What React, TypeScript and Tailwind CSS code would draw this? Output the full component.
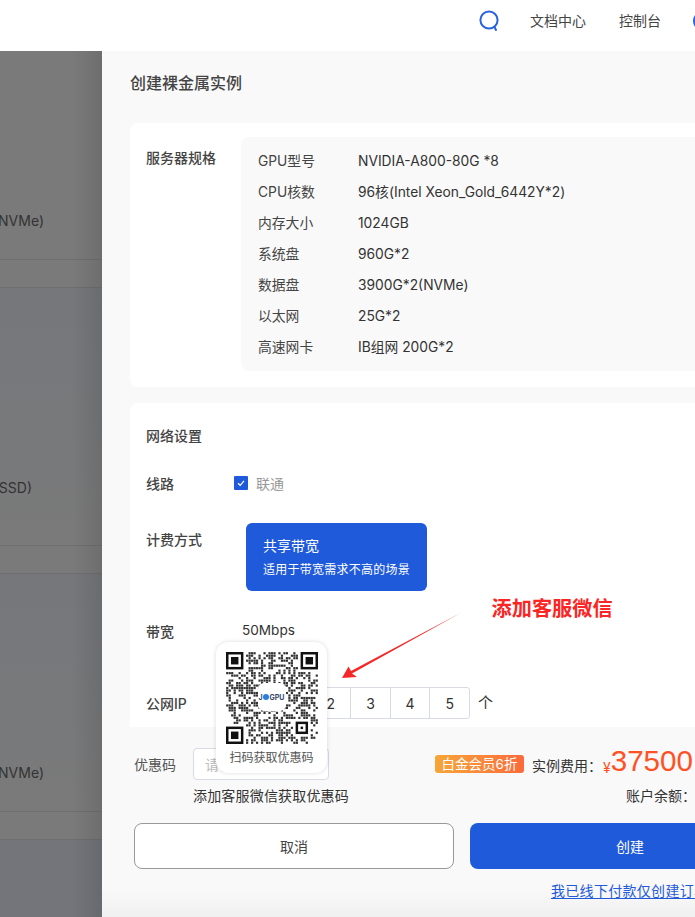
import React from "react";

const specs: [string, string][] = [
  ["GPU型号", "NVIDIA-A800-80G *8"],
  ["CPU核数", "96核(Intel Xeon_Gold_6442Y*2)"],
  ["内存大小", "1024GB"],
  ["系统盘", "960G*2"],
  ["数据盘", "3900G*2(NVMe)"],
  ["以太网", "25G*2"],
  ["高速网卡", "IB组网 200G*2"],
];

const N = 37;
function qrCells(): [number, number][] {
  const out: [number, number][] = [];
  let s = 20240611;
  const inBox = (x: number, y: number, a: number, b: number, w: number) => x >= a && x < a + w && y >= b && y < b + w;
  for (let y = 0; y < N; y++) {
    for (let x = 0; x < N; x++) {
      s = (s * 1664525 + 1013904223) >>> 0;
      if (inBox(x, y, 0, 0, 8) || inBox(x, y, N - 8, 0, 8) || inBox(x, y, 0, N - 8, 8) || inBox(x, y, 27, 27, 7)) continue;
      if ((s >>> 16) % 100 < 50) out.push([x, y]);
    }
  }
  return out;
}
const cells = qrCells();

function Finder({ x, y }: { x: number; y: number }) {
  return (
    <g>
      <rect x={x} y={y} width={7} height={7} fill="#111" />
      <rect x={x + 1} y={y + 1} width={5} height={5} fill="#fff" />
      <rect x={x + 2} y={y + 2} width={3} height={3} fill="#111" />
    </g>
  );
}

function QrCode() {
  return (
    <div className="relative h-[92px] w-[92px]">
      <svg width="92" height="92" viewBox={`0 0 ${N} ${N}`}>
        {cells.map(([x, y]) => (
          <rect key={`${x}-${y}`} x={x + 0.06} y={y + 0.06} width={0.88} height={0.88} fill="#333" />
        ))}
        <Finder x={0} y={0} />
        <Finder x={N - 7} y={0} />
        <Finder x={0} y={N - 7} />
        <rect x={28} y={28} width={5} height={5} fill="#111" />
        <rect x={29} y={29} width={3} height={3} fill="#fff" />
        <rect x={30} y={30} width={1} height={1} fill="#111" />
      </svg>
      <div className="absolute left-[32px] top-[31px] flex h-[28px] w-[28px] items-center justify-center rounded-md bg-white">
        <span className="flex items-center text-[7px] font-bold leading-none text-[#33476b]">
          J
          <span className="mx-[0.5px] inline-block h-[6px] w-[6px] rounded-full bg-[#2a7de1]" />
          GPU
        </span>
      </div>
    </div>
  );
}

export default function App() {
  return (
    <div className="flex h-[917px] w-[695px] flex-col overflow-hidden bg-white font-['Inter','Noto_Sans_CJK_SC',sans-serif] text-[14px] text-[#333]">
      <header className="flex h-[51px] shrink-0 items-center bg-white pb-[10px] pl-[478px]">
        <svg width="22" height="24" viewBox="0 0 22 24" fill="none" className="mt-[1px] shrink-0">
          <circle cx="11" cy="11" r="8.6" stroke="#2a62e0" strokeWidth="2" />
          <path d="M16.5 18 L18 21" stroke="#2a62e0" strokeWidth="2" strokeLinecap="round" />
        </svg>
        <span className="ml-[30px] whitespace-nowrap text-[#444]">文档中心</span>
        <span className="ml-[33px] whitespace-nowrap text-[#444]">控制台</span>
        <span className="ml-[32px] h-[20px] w-[20px] shrink-0 rounded-full bg-[#2a62e0]" />
      </header>

      <div className="flex min-h-0 flex-1">
        {/* dimmed page behind the drawer */}
        <div className="relative flex w-[102px] shrink-0 flex-col bg-[#7a7a7a] text-[#333]">
          <div className="flex h-[208px] w-[44px] items-end justify-end pb-[28px] whitespace-nowrap leading-[20px]">3900G*2(NVMe)</div>
          <div className="h-[29px] border-y border-[#6f6f6f]" />
          <div className="h-[257px] bg-gradient-to-b from-[#75777b] to-[#7a7a7a]">
            <div className="flex h-[257px] w-[32px] items-end justify-end pb-[47px] whitespace-nowrap leading-[20px]">960G*2(SSD)</div>
          </div>
          <div className="h-[29px] border-y border-[#6f6f6f]" />
          <div className="h-[237px] bg-gradient-to-b from-[#75777b] to-[#7a7a7a]">
            <div className="flex h-[237px] w-[44px] items-end justify-end pb-[28px] whitespace-nowrap leading-[20px]">3900G*2(NVMe)</div>
          </div>
          <div className="h-[29px] border-y border-[#6f6f6f]" />
          <div className="flex-1 bg-[#73757a]" />
          <div className="absolute inset-y-0 right-0 w-[30px] bg-gradient-to-l from-black/10 to-transparent" />
        </div>

        {/* drawer */}
        <div className="relative flex w-[593px] shrink-0 flex-col overflow-hidden bg-[#f9f9f9]">
          <div className="h-[676px] shrink-0 overflow-hidden pl-[28px]">
            <h1 className="flex h-[72px] items-start pt-[21px] text-[16px] font-medium leading-[22px] text-[#444]">创建裸金属实例</h1>

            <section className="flex h-[264px] w-[640px] rounded-lg bg-white pl-[16px] pt-[14px]">
              <div className="w-[95px] shrink-0 pt-[11px] font-medium leading-[20px] text-[#444]">服务器规格</div>
              <div className="h-[234px] flex-1 rounded-lg bg-[#f9f9f9] pl-[17px] pt-[9px]">
                {specs.map(([k, v]) => (
                  <div key={k} className="flex h-[31px] items-center">
                    <span className="w-[100px] shrink-0 text-[13.8px] text-[#444]">{k}</span>
                    <span className="whitespace-nowrap text-[13.8px] text-[#333]">{v}</span>
                  </div>
                ))}
              </div>
            </section>

            <section className="mt-[16px] h-[340px] w-[640px] rounded-t-lg bg-white pl-[16px]">
              <div className="pt-[23px] font-medium leading-[20px] text-[#444]">网络设置</div>
              <div className="mt-[27px] flex h-[20px] items-center">
                <span className="w-[88px] font-medium text-[#444]">线路</span>
                <span className="flex h-[14px] w-[14px] items-center justify-center rounded-[1px] bg-[#1f5adb]">
                  <svg width="10" height="10" viewBox="0 0 10 10" fill="none">
                    <path d="M2 5.2 L4.2 7.3 L8 2.8" stroke="#fff" strokeWidth="1.2" />
                  </svg>
                </span>
                <span className="ml-[8px] text-[#999]">联通</span>
              </div>
              <div className="mt-[30px] flex items-start">
                <span className="w-[100px] pt-[7px] font-medium leading-[20px] text-[#444]">计费方式</span>
                <div className="flex h-[68px] w-[181px] flex-col rounded-md bg-[#1f5adb] pl-[17px] pt-[13px] text-white">
                  <span className="leading-[20px]">共享带宽</span>
                  <span className="mt-[4px] whitespace-nowrap text-[12px] leading-[20px] tracking-[0.25px]">适用于带宽需求不高的场景</span>
                </div>
              </div>
              <div className="mt-[30px] flex h-[20px] items-center">
                <span className="w-[96px] font-medium text-[#444]">带宽</span>
                <span className="mt-[-1px] text-[13.6px] text-[#333]">50Mbps</span>
              </div>
              <div className="mt-[46px] flex h-[32px] items-center">
                <span className="w-[124px] font-medium text-[#444]">公网IP</span>
                <div className="flex h-[32px] overflow-hidden rounded-[3px] border border-[#d8dbe6]">
                  {["1", "2", "3", "4", "5"].map((n) => (
                    <span key={n} className="flex w-[39.6px] items-center justify-center border-l border-[#d8dbe6] first:border-l-0">
                      {n}
                    </span>
                  ))}
                </div>
                <span className="ml-[8px] text-[15px]">个</span>
              </div>
            </section>
          </div>

          <footer className="flex flex-1 flex-col bg-gradient-to-b from-[#f9f9f9] from-85% to-[#f0f0f0] pl-[32px] pt-[21px]">
            <div className="flex">
              <div className="w-[301px] shrink-0">
                <div className="flex items-center">
                  <span className="w-[59px] text-[#555]">优惠码</span>
                  <div className="flex h-[32px] w-[136px] items-center rounded-[4px] border border-[#d8dbe6] bg-white pl-[11px] text-[#bbb]">
                    请输入优惠码
                  </div>
                </div>
                <div className="ml-[59px] mt-[6px] whitespace-nowrap leading-[20px] tracking-[0.18px] text-[#333]">添加客服微信获取优惠码</div>
              </div>
              <div className="min-w-0 flex-1">
                <div className="flex h-[32px] items-start whitespace-nowrap">
                  <span className="mt-[7px] flex h-[18px] w-[89px] shrink-0 items-center justify-center rounded-[3px] bg-gradient-to-r from-[#f6a537] to-[#fb6a3b] text-[13.5px] text-white">
                    白金会员6折
                  </span>
                  <span className="ml-[8px] mt-[8px] leading-[20px]">实例费用：</span>
                  <span className="ml-[1px] mt-[10px] text-[14px] leading-[20px] text-[#ff5126]">¥</span>
                  <span className="mt-[-5px] font-['Liberation_Sans',sans-serif] text-[29.6px] leading-[36px] text-[#ff5126]">37500</span>
                </div>
                <div className="mt-[6px] whitespace-nowrap pl-[191px] leading-[20px] text-[#333]">账户余额：</div>
              </div>
            </div>

            <div className="mt-[17px] flex gap-[16px]">
              <button className="h-[46px] w-[320px] shrink-0 rounded-lg border border-[#999] bg-white text-[#444]">取消</button>
              <button className="h-[46px] w-[320px] shrink-0 rounded-lg bg-[#1f5adb] text-white">创建</button>
            </div>
            <div className="ml-[417px] mt-[12px] whitespace-nowrap leading-[20px] tracking-[0.3px] text-[#1f5adb] underline underline-offset-2">我已线下付款仅创建订单</div>
          </footer>

          {/* QR popover */}
          <div className="absolute left-[114px] top-[591px] flex h-[131px] w-[111px] flex-col items-center rounded-xl bg-white pt-[10px] shadow-[0_0_4px_rgba(0,0,0,0.15)]">
            <QrCode />
            <span className="mt-[5px] whitespace-nowrap text-[12px] leading-[18px] text-[#555]">扫码获取优惠码</span>
          </div>

          {/* annotation */}
          <svg className="pointer-events-none absolute left-[230px] top-[552px]" width="135" height="85" viewBox="0 0 135 85">
            <polygon points="128.5,10 20,70.5 25,74 10,75 16.5,63.5 19,68" fill="#f52727" />
          </svg>
          <span className="absolute left-[389.5px] top-[544px] whitespace-nowrap text-[20.2px] font-bold leading-[28px] text-[#fb2525]">添加客服微信</span>
        </div>
      </div>
    </div>
  );
}
